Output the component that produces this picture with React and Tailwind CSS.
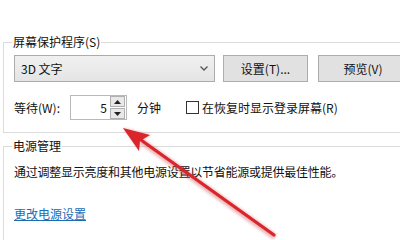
import React from 'react';

const GroupBox = ({ title, className, children }) => {
  return (
    <fieldset className={`ml-[3px] w-[430px] border-l border-t border-[#dcdcdc] ${className}`}>
      <legend className="ml-[8px] px-[1px] leading-[16px]">{title}</legend>
      {children}
    </fieldset>
  );
};

const Button = ({ children, className }) => (
  <div
    className={`flex h-[27px] items-center justify-center border border-[#adadad] bg-[#e1e1e1] ${className}`}
  >
    {children}
  </div>
);

const SpinBox = ({ value }) => (
  <div className="flex h-[25px] w-[57px] items-center border border-[#b9b9b9] bg-white pl-1 pr-[1px]">
    <span className="flex-1 pr-[3px] text-right">{value}</span>
    <div className="flex h-[23px] w-[15px] flex-col gap-[1px]">
      <div className="flex flex-1 items-center justify-center border border-[#b0b0b0] bg-[#e8e8e8]">
        <svg width="7" height="4" viewBox="0 0 7 4">
          <path d="M0 4 L3.5 0 L7 4 Z" fill="#222" />
        </svg>
      </div>
      <div className="flex flex-1 items-center justify-center border border-[#b0b0b0] bg-[#e8e8e8]">
        <svg width="7" height="4" viewBox="0 0 7 4">
          <path d="M0 0 L3.5 4 L7 0 Z" fill="#222" />
        </svg>
      </div>
    </div>
  </div>
);

const Arrow = () => {
  // tip at (123,128), tail near the bottom edge
  return (
    <svg className="pointer-events-none absolute left-0 top-0" width="400" height="240">
      <defs>
        <filter id="blur" x="-20%" y="-20%" width="140%" height="140%">
          <feGaussianBlur stdDeviation="1.6" />
        </filter>
      </defs>
      <g filter="url(#blur)" opacity="0.35">
        <line x1="275" y1="237" x2="141" y2="141" stroke="#c0282c" strokeWidth="6" />
        <path d="M123 128 L140 151 L139 141 L151 135 Z" fill="#c0282c" />
      </g>
      <line x1="274" y1="235" x2="141" y2="140" stroke="#d9252b" strokeWidth="3.2" strokeLinecap="round" />
      <path d="M123 128 L139 151 L140 141 L150 135 Z" fill="#d9252b" />
    </svg>
  );
};

export default function App() {
  return (
    <div className="relative h-[240px] w-[400px] overflow-hidden bg-white pt-[34px] font-['Noto_Sans_CJK_SC',sans-serif] text-[12px] text-[#111]">
      <GroupBox title="屏幕保护程序(S)" className="border-b pb-[12px]">
        <div className="mt-[5px] flex items-center pl-[10px]">
          <div className="flex h-[27px] w-[201px] items-center justify-between border border-[#acacac] bg-gradient-to-b from-[#f1f1f1] to-[#e4e4e4] pl-[6px] pr-[6px]">
            <span>3D 文字</span>
            <svg width="8" height="5" viewBox="0 0 8 5">
              <path d="M0.5 0.5 L4 4 L7.5 0.5" fill="none" stroke="#555" strokeWidth="1.3" />
            </svg>
          </div>
          <Button className="ml-[8px] w-[85px]">设置(T)...</Button>
          <Button className="ml-[10px] w-[90px]">预览(V)</Button>
        </div>
        <div className="mt-[13px] flex items-center pl-[10px]">
          <span className="w-[56px]">等待(W):</span>
          <SpinBox value="5" />
          <span className="ml-[10px]">分钟</span>
          <div className="ml-[25px] h-[13px] w-[13px] border border-[#333] bg-white" />
          <span className="ml-[3px]">在恢复时显示登录屏幕(R)</span>
        </div>
      </GroupBox>
      <GroupBox title="电源管理" className="mt-[5px] h-[140px]">
        <p className="mt-[10px] pl-[10px] leading-[16px] tracking-[-0.25px]">
          通过调整显示亮度和其他电源设置以节省能源或提供最佳性能。
        </p>
        <a className="ml-[10px] mt-[26px] inline-block leading-[16px] text-[#1a6cb5] underline">
          更改电源设置
        </a>
      </GroupBox>
      <Arrow />
    </div>
  );
}
